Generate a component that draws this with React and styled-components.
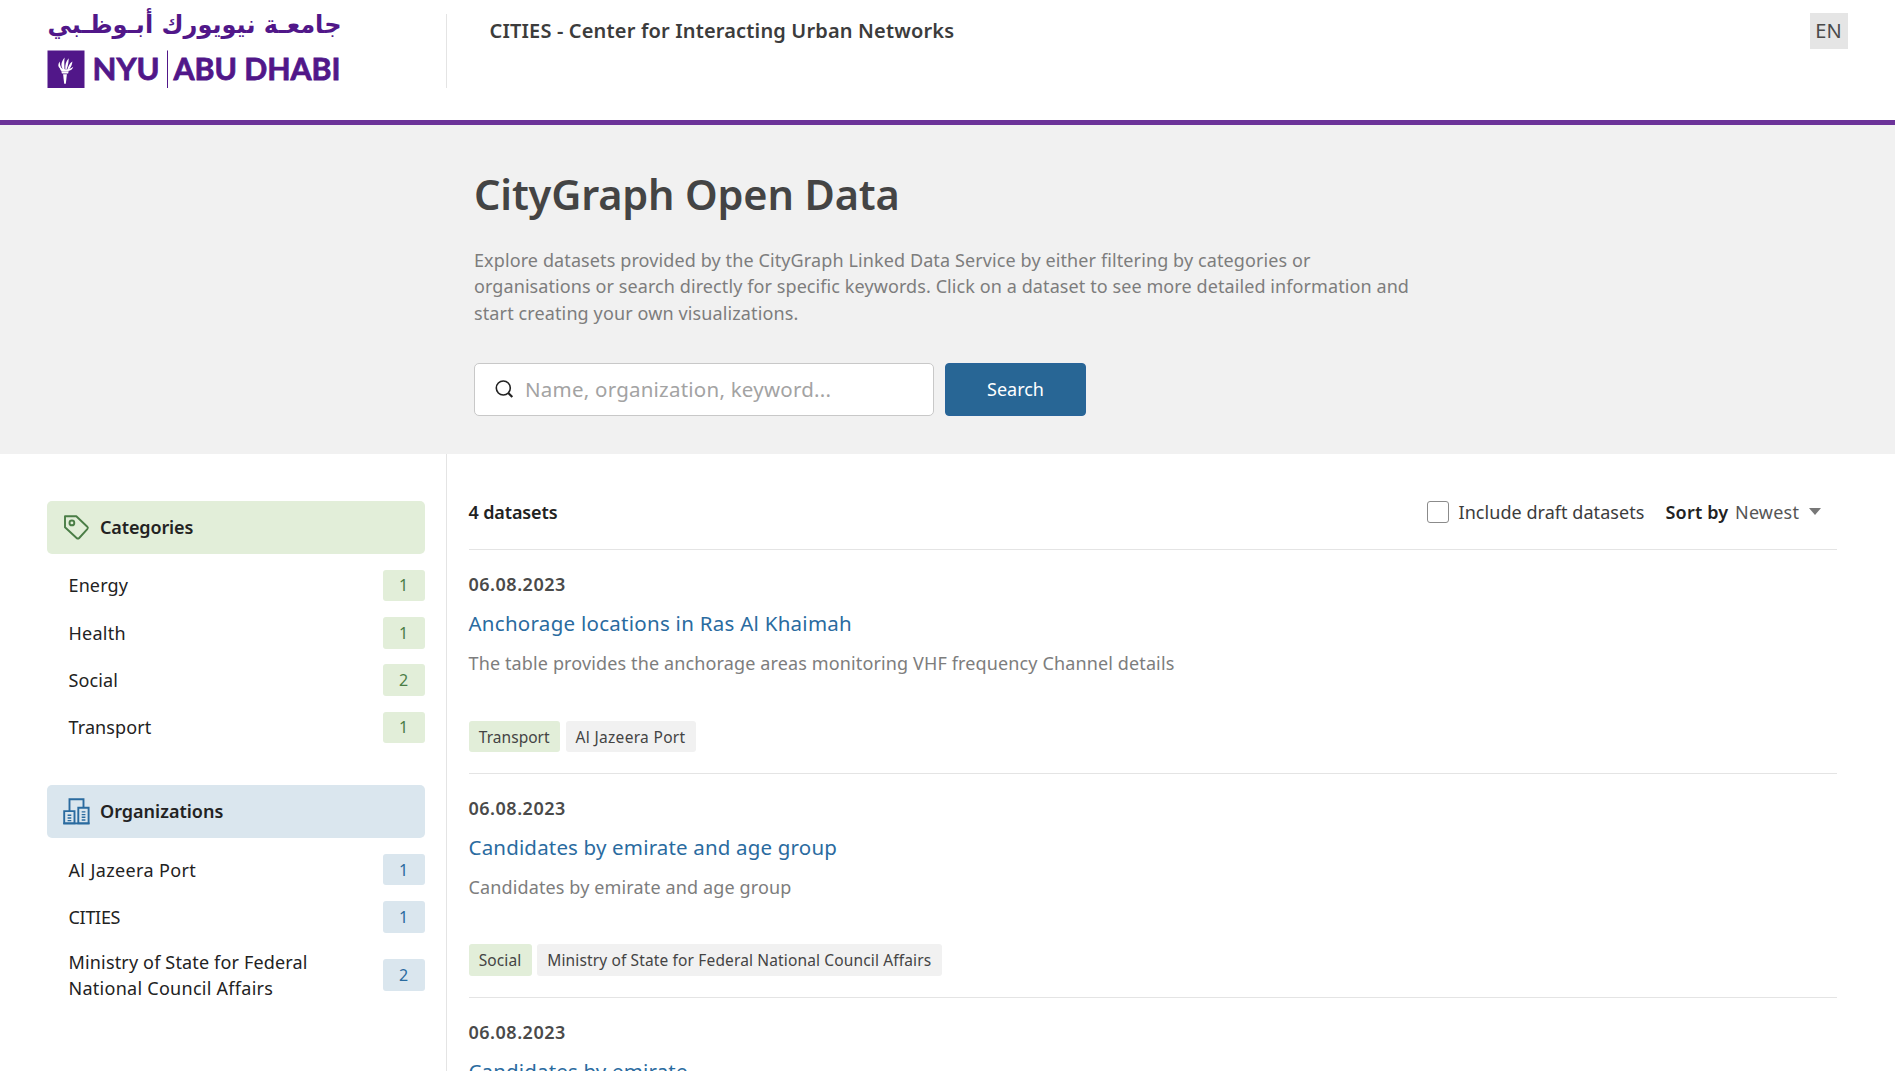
import React from "react";
import styled, { createGlobalStyle, css } from "styled-components";

const Global = createGlobalStyle`
  *, *::before, *::after { box-sizing: border-box; }
  html, body { height: 100%; overflow: hidden; }
  body {
    margin: 0;
    background: #fff;
    color: #222;
    font-family: "Noto Sans", "Open Sans", sans-serif;
    font-size: 18px;
    line-height: 26.4px;
  }
  h1, h2, h3, p, ul { margin: 0; padding: 0; }
`;

/* Single-line copy; $track is the tracking in px. */
const track = css`
  white-space: nowrap;
  letter-spacing: ${(p) => p.$track || 0}px;
`;

const Page = styled.div`
  height: 1071px;
  overflow: hidden;
  display: flex;
  flex-direction: column;
`;

const Header = styled.header`
  flex: none;
  height: 125px;
  padding: 14px 47px 0 47px;
  border-bottom: 5px solid #6c3399;
  display: flex;
  align-items: flex-start;
`;

const LogoCell = styled.a`
  width: 400px;
  height: 74px;
  border-right: 1px solid #e4e4e4;
  flex: none;
`;

const LogoSvg = styled.svg`
  display: block;
  margin-top: -12px;
  overflow: visible;
`;

const SiteName = styled.div`
  ${track}
  flex: 1;
  padding: 4px 0 0 42.5px;
  font-size: 20px;
  font-weight: 600;
  color: #3c3c3c;
`;

const Lang = styled.button`
  width: 38px;
  height: 36px;
  margin-top: -1px;
  padding: 0 1px 0 0;
  border: 0;
  background: #e5e5e5;
  color: #4a4a4a;
  font: 400 20px/36px "Noto Sans", sans-serif;
`;

const Hero = styled.section`
  flex: none;
  height: 329px;
  padding: 41px 0 0 474px;
  background: #f1f1f1;
`;

const Title = styled.h1`
  ${track}
  font-size: 41.5px;
  line-height: 56px;
  font-weight: 600;
  color: #444;
`;

const Intro = styled.p`
  margin: 25px 0 37px;
  color: #7d7d7d;
`;

const Line = styled.span`
  ${track}
  display: block;
`;

const SearchRow = styled.form`
  display: flex;
  gap: 11px;
`;

const SearchBox = styled.label`
  width: 460px;
  height: 53px;
  padding: 0 0 1px 18.5px;
  display: flex;
  align-items: center;
  gap: 9.5px;
  background: #fff;
  border: 1px solid #c8c8c8;
  border-radius: 5px;
`;

const Placeholder = styled.span`
  ${track}
  font-size: 20.5px;
  color: #a3a3a3;
`;

const SearchButton = styled.button`
  ${track}
  width: 141px;
  height: 53px;
  padding: 0 0 2px;
  border: 1px solid #28649a;
  border-radius: 4px;
  background: #286695;
  color: #fff;
  font-family: inherit;
  font-size: 18px;
`;

const Body = styled.div`
  flex: 1;
  min-height: 0;
  display: flex;
`;

const Sidebar = styled.aside`
  flex: none;
  width: 447px;
  padding: 47px 21.5px 0 47px;
  border-right: 1px solid #e4e4e4;
  display: flex;
  flex-direction: column;
  gap: 42px;
`;

const FacetHead = styled.h2`
  ${track}
  height: 52.7px;
  padding-left: 16px;
  display: flex;
  align-items: center;
  gap: 10px;
  border-radius: 5px;
  background: ${(p) => p.$bg};
  color: #222;
  font-size: 18px;
  font-weight: 600;
`;

const FacetList = styled.ul`
  margin-top: 16.1px;
  list-style: none;
  display: flex;
  flex-direction: column;
  gap: 15.8px;
`;

const FacetItem = styled.li`
  min-height: 31.5px;
  padding-left: 21.5px;
  display: flex;
  align-items: center;
  justify-content: space-between;
`;

const Count = styled.span`
  width: 42px;
  height: 31.5px;
  display: flex;
  align-items: center;
  justify-content: center;
  border-radius: 3px;
  font-size: 16px;
  background: ${(p) => p.$bg};
  color: ${(p) => p.$fg};
`;

const Main = styled.main`
  flex: 1;
  padding: 0 58px 0 21.5px;
`;

const Toolbar = styled.div`
  height: 96px;
  padding: 20.5px 16px 0 0;
  display: flex;
  align-items: center;
  border-bottom: 1px solid #e4e4e4;
`;

const Total = styled.span`
  ${track}
  flex: 1;
  font-weight: 600;
`;

const Check = styled.span`
  width: 22px;
  height: 22px;
  margin-right: 10px;
  border: 1px solid #8b8b8b;
  border-radius: 3px;
`;

const DraftLabel = styled.span`
  ${track}
  width: 207px;
  color: #3c3c3c;
`;

const SortLabel = styled.span`
  ${track}
  width: 69.5px;
  font-weight: 600;
`;

const SortValue = styled.span`
  ${track}
  width: 74px;
  color: #555;
`;

const Caret = styled.span`
  border: 6px solid transparent;
  border-top: 7px solid #777;
  border-bottom: 0;
`;

const Entry = styled.article`
  height: 223.9px;
  padding-top: 21px;
  border-bottom: 1px solid #e4e4e4;
`;

const Stamp = styled.div`
  ${track}
  font-weight: 600;
  color: #4a4a4a;
`;

const EntryTitle = styled.h3`
  ${track}
  margin-top: 12px;
  font-size: 20.5px;
  line-height: 28px;
  font-weight: 400;
  color: #2a6b9f;
`;

const Summary = styled.p`
  ${track}
  height: 26.4px;
  margin-top: 12.5px;
  color: #7d7d7d;
`;

const Tags = styled.div`
  margin-top: 44.3px;
  display: flex;
  gap: 5.5px;
`;

const Tag = styled.span`
  ${track}
  width: ${(p) => p.$w}px;
  height: 31.5px;
  line-height: 32.5px;
  text-align: center;
  border-radius: 3px;
  font-size: 15.5px;
  color: #444;
  background: ${(p) => (p.$green ? "#e2eed9" : "#f1f1f1")};
`;

const Logo = () => (
  <LogoSvg width="296" height="88" viewBox="0 -12 296 88" fill="#511789">
    <text x="294.5" y="19" direction="rtl" fontFamily="DejaVu Sans, sans-serif" fontWeight="700" fontSize="25" textLength="294" lengthAdjust="spacingAndGlyphs">جامعـة نيويورك أبـوظـبي</text>
    <rect x="0.5" y="36.5" width="37" height="37.5" />
    <g fill="#fff">
      <path d="M14.3 57.2h7.4l-.6 2.3h-6.2z" />
      <path d="M16.1 60.3h3.8l-1.1 9.4h-1.6z" />
      <path d="M13.2 54.8c-2.6-2.5-2.4-5-.2-7.4-.5 2.6.2 4.6 2.2 7.4z" />
      <path d="M15.8 55c-2.400-3.900-1.400-7.300 1.800-11.500-.5 3.700-.2 7-.1 11.500z" />
      <path d="M18.300 55c-.2-4.300.5-7.500 3.400-10.700 0 4-.7 7.400-2 10.700z" />
      <path d="M20.500 55c1-2.600 1.800-5.500 4.900-7.400-.3 3.200-1.300 5.600-3.300 7.700z" />
      <path d="M12.800 53.500c.2 2 1 3.200 2 3.600h6.400c2.500-.4 4.200-1.900 5.100-4.300-3.500 3-8 3.300-13.500.7z" />
    </g>
    <g fontFamily="Lato, sans-serif" fontWeight="700" fontSize="30" stroke="#511789" strokeWidth=".8">
      <text x="45.5" y="66" textLength="67" lengthAdjust="spacingAndGlyphs">NYU</text>
      <text x="126.5" y="66" textLength="167" lengthAdjust="spacingAndGlyphs">ABU DHABI</text>
    </g>
    <rect x="120" y="36.5" width="1" height="37.5" />
  </LogoSvg>
);

const SearchIcon = () => (
  <svg width="22" height="22" viewBox="0 0 22 22" fill="none" stroke="#222" strokeWidth="1.6">
    <circle cx="9.3" cy="10" r="7" />
    <path d="M14.3 15l4 4" strokeWidth="2.2" />
  </svg>
);

const TagIcon = () => (
  <svg width="27" height="27" viewBox="0 0 27 27" fill="none" stroke="#4a7d46" strokeWidth="1.9" strokeLinejoin="round">
    <path d="M2 2.200h11.300L24.300 12.700q1.200 1.200 0 2.400L16.200 24q-1.300 1.200-2.600 0L2 13.200z" />
    <circle cx="8.9" cy="8.9" r="2.4" />
  </svg>
);

const OrgIcon = () => (
  <svg width="27" height="27" viewBox="0 0 27 27" fill="none" stroke="#2a6b9f" strokeWidth="1.9">
    <path d="M6.500 13V1.200h14v7.900" />
    <path d="M1.200 25.400V13.100h10.300v12.300zM15.300 25.400V9.700h10.300v15.700z" />
    <path d="M0.300 25.400h26.200" />
    <path d="M4.600 17.300h3.700M4.600 20h3.700M4.600 22.600h3.700M18.700 13.900h3.700M18.700 16.600h3.700M18.700 19.300h3.700M18.700 22h3.700" strokeWidth="1.4" />
  </svg>
);

const green = { bg: "#e2eed9", fg: "#4a7d46" };
const blue = { bg: "#dae6ee", fg: "#2a6b9f" };

const facets = [
  {
    name: "Categories", tracking: -0.14, Icon: TagIcon, tone: green,
    items: [
      [[["Energy", 0.12]], 1],
      [[["Health", 0.25]], 1],
      [[["Social", 0.1]], 2],
      [[["Transport", 0.1]], 1],
    ],
  },
  {
    name: "Organizations", tracking: 0, Icon: OrgIcon, tone: blue,
    items: [
      [[["Al Jazeera Port", 0.37]], 1],
      [[["CITIES", -0.3]], 1],
      [[["Ministry of State for Federal", 0.16], ["National Council Affairs", 0.27]], 2],
    ],
  },
];

const entries = [
  {
    title: "Anchorage locations in Ras Al Khaimah", tracking: 0.27,
    text: "The table provides the anchorage areas monitoring VHF frequency Channel details",
    tags: [["Transport", 91.5, 0.03], ["Al Jazeera Port", 130, 0.32]],
  },
  {
    title: "Candidates by emirate and age group", tracking: 0.17,
    text: "Candidates by emirate and age group",
    tags: [["Social", 63, 0.1], ["Ministry of State for Federal National Council Affairs", 404.5, 0.14]],
  },
  { title: "Candidates by emirate", tracking: 0.16, text: "", tags: [] },
];

const intro = [
  ["Explore datasets provided by the CityGraph Linked Data Service by either filtering by categories or", 0.11],
  ["organisations or search directly for specific keywords. Click on a dataset to see more detailed information and", 0.09],
  ["start creating your own visualizations.", 0.12],
];

const Lines = ({ rows }) => rows.map(([text, t]) => <Line key={text} $track={t}>{text}</Line>);

export default function App() {
  return (
    <Page>
      <Global />
      <Header>
        <LogoCell><Logo /></LogoCell>
        <SiteName $track={0.16}>CITIES - Center for Interacting Urban Networks</SiteName>
        <Lang>EN</Lang>
      </Header>
      <Hero>
        <Title $track={-0.16}>CityGraph Open Data</Title>
        <Intro><Lines rows={intro} /></Intro>
        <SearchRow>
          <SearchBox><SearchIcon /><Placeholder $track={0.23}>Name, organization, keyword...</Placeholder></SearchBox>
          <SearchButton type="button">Search</SearchButton>
        </SearchRow>
      </Hero>
      <Body>
        <Sidebar>
          {facets.map(({ name, tracking, Icon, tone, items }) => (
            <section key={name}>
              <FacetHead $bg={tone.bg} $track={tracking}><Icon />{name}</FacetHead>
              <FacetList>
                {items.map(([rows, n]) => (
                  <FacetItem key={rows[0][0]}>
                    <span><Lines rows={rows} /></span>
                    <Count $bg={tone.bg} $fg={tone.fg}>{n}</Count>
                  </FacetItem>
                ))}
              </FacetList>
            </section>
          ))}
        </Sidebar>
        <Main>
          <Toolbar>
            <Total $track={-0.13}>4 datasets</Total>
            <Check />
            <DraftLabel $track={0.05}>Include draft datasets</DraftLabel>
            <SortLabel $track={0.19}>Sort by</SortLabel>
            <SortValue $track={0.2}>Newest</SortValue>
            <Caret />
          </Toolbar>
          {entries.map((e) => (
            <Entry key={e.title}>
              <Stamp $track={0.5}>06.08.2023</Stamp>
              <EntryTitle $track={e.tracking}>{e.title}</EntryTitle>
              <Summary $track={0.13}>{e.text}</Summary>
              <Tags>{e.tags.map(([t, w, ls], i) => <Tag key={t} $w={w} $track={ls} $green={i === 0}>{t}</Tag>)}</Tags>
            </Entry>
          ))}
        </Main>
      </Body>
    </Page>
  );
}
